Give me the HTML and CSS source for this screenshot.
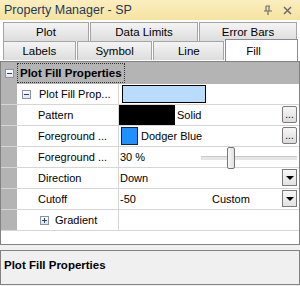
FILE: index.html
```html
<!DOCTYPE html>
<html>
<head>
<meta charset="utf-8">
<title>Property Manager</title>
<link rel="stylesheet" href="styles.css">
</head>
<body>
<div class="window">
	<div class="titlebar">
		<span class="title">Property Manager - SP</span>
		<span class="ctrls">
			<svg width="10" height="11" viewBox="0 0 10 11"><path d="M3 1h4M3 1v5M6 1v5M1 6h8M5 6v4" stroke="#6b6b6b" stroke-width="1.2" fill="none"/></svg>
			<svg width="9" height="9" viewBox="0 0 9 9"><path d="M1 1l7 7M8 1l-7 7" stroke="#6b6b6b" stroke-width="1.5"/></svg>
		</span>
	</div>

	<div class="tabs">
		<div class="tabrow row1">
			<div class="tab">Plot</div>
			<div class="tab">Data Limits</div>
			<div class="tab">Error Bars</div>
		</div>
		<div class="tabrow row2">
			<div class="tab">Labels</div>
			<div class="tab">Symbol</div>
			<div class="tab">Line</div>
			<div class="tab active">Fill</div>
		</div>
	</div>

	<div class="grid">
		<div class="cat">
			<div class="gut"><span class="box minus"></span></div>
			<div class="catname">Plot Fill Properties</div>
		</div>
		<div class="row">
			<div class="gut"></div>
			<div class="name sub"><span class="box minus"></span>Plot Fill Prop...</div>
			<div class="val"><span class="swatch lightblue"></span></div>
		</div>
		<div class="row">
			<div class="gut"></div>
			<div class="name">Pattern</div>
			<div class="val"><span class="pat"></span>Solid<span class="btn">...</span></div>
		</div>
		<div class="row">
			<div class="gut"></div>
			<div class="name">Foreground ...</div>
			<div class="val"><span class="chip"></span>Dodger Blue<span class="btn">...</span></div>
		</div>
		<div class="row">
			<div class="gut"></div>
			<div class="name">Foreground ...</div>
			<div class="val">30 %<span class="slider"><span class="thumb"></span></span></div>
		</div>
		<div class="row">
			<div class="gut"></div>
			<div class="name">Direction</div>
			<div class="val">Down<span class="drop"></span></div>
		</div>
		<div class="row">
			<div class="gut"></div>
			<div class="name">Cutoff</div>
			<div class="val">-50<span class="extra">Custom</span><span class="drop"></span></div>
		</div>
		<div class="row">
			<div class="gut"></div>
			<div class="name sub deep"><span class="box plus"></span>Gradient</div>
			<div class="val"></div>
		</div>
	</div>

	<div class="desc">Plot Fill Properties</div>
</div>
</body>
</html>
```

FILE: styles.css
```css
body {
	margin: 0;
	font-family: "Liberation Sans", Arial, sans-serif;
	font-size: 11px;
	color: #000;
	background: #f0f0f0;
}
.window {
	width: 300px;
	height: 286px;
	display: flex;
	flex-direction: column;
	background: #f0f0f0;
}
.titlebar {
	height: 20px;
	background: linear-gradient(#fbeebf, #f6e39f);
	display: flex;
	align-items: center;
	justify-content: space-between;
	padding: 0 8px 0 4px;
	color: #1e395b;
	font-size: 12.5px;
}
.ctrls {
	display: flex;
	align-items: center;
	gap: 10px;
}
.tabs {
	background: #fff;
	padding: 2px 2px 0 3px;
	height: 41px;
	box-sizing: border-box;
	position: relative;
}
.tabrow {
	display: flex;
	gap: 1px;
	height: 19px;
}
.tab {
	border: 1px solid #a4a4a4;
	border-bottom: none;
	background: linear-gradient(#f4f4f4, #dddddd);
	display: flex;
	align-items: center;
	justify-content: center;
	box-sizing: border-box;
	font-size: 11.5px;
}
.row1 .tab:nth-child(1) { width: 86px; }
.row1 .tab:nth-child(2) { width: 108px; }
.row1 .tab:nth-child(3) { width: 98px; }
.row2 .tab:nth-child(1) { width: 73px; }
.row2 .tab:nth-child(2) { width: 76px; }
.row2 .tab:nth-child(3) { width: 71px; }
.row2 .tab.active {
	width: 73px;
	background: #fff;
	height: 22px;
	margin-top: -2px;
	border-color: #898c95;
	justify-content: flex-start;
	padding-left: 20px;
	position: relative;
	z-index: 1;
}
.grid {
	border: 1px solid #828282;
	background: #fff;
	height: 184px;
	box-sizing: border-box;
	display: flex;
	flex-direction: column;
}
.cat {
	display: flex;
	height: 22px;
	background: #b4b4b4;
}
.gut {
	width: 16px;
	background: #b4b4b4;
	display: flex;
	align-items: center;
	justify-content: center;
	flex: none;
}
.catname {
	font-weight: bold;
	font-size: 11.5px;
	display: flex;
	align-items: center;
	padding: 0 2px;
	border: 1px dotted #333;
	margin: 1px 0;
}
.row {
	display: flex;
	height: 21px;
	border-bottom: 1px solid #d6d6d6;
	box-sizing: border-box;
}
.name {
	width: 102px;
	box-sizing: border-box;
	padding-left: 21px;
	border-right: 1px solid #d6d6d6;
	display: flex;
	align-items: center;
	flex: none;
	white-space: nowrap;
}
.name.sub {
	padding-left: 5px;
}
.name.deep {
	padding-left: 23px;
}
.val {
	flex: 1;
	display: flex;
	align-items: center;
	padding-left: 1px;
	position: relative;
}
.box {
	width: 7px;
	height: 7px;
	border: 1px solid #8a93a8;
	background: linear-gradient(#fff, #dfe4ee);
	position: relative;
	margin-right: 8px;
	flex: none;
}
.deep .box { margin-right: 6px; }
.gut .box { margin: 0; }
.box::before {
	content: "";
	position: absolute;
	left: 1px;
	top: 3px;
	width: 5px;
	height: 1px;
	background: #2b3f7a;
}
.plus::after {
	content: "";
	position: absolute;
	left: 3px;
	top: 1px;
	width: 1px;
	height: 5px;
	background: #2b3f7a;
}
.swatch {
	width: 82px;
	height: 16px;
	border: 1px solid #000;
	margin-left: 2px;
}
.lightblue { background: #b9dbfd; }
.pat {
	width: 56px;
	height: 20px;
	background: #000;
	margin-left: -1px;
	margin-right: 2px;
}
.chip {
	width: 15px;
	height: 16px;
	background: #1e90ff;
	border: 1px solid #222;
	margin-right: 3px;
	margin-left: 1px;
}
.btn {
	position: absolute;
	right: 2px;
	top: 1px;
	width: 15px;
	height: 17px;
	border: 1px solid #7a7a7a;
	border-radius: 2px;
	background: linear-gradient(#f7f7f7, #dcdcdc);
	box-sizing: border-box;
	font-size: 10px;
	line-height: 16px;
	text-align: center;
}
.drop {
	position: absolute;
	right: 2px;
	top: 1px;
	width: 15px;
	height: 17px;
	border: 1px solid #7a7a7a;
	background: linear-gradient(#f7f7f7, #e2e2e2);
	box-sizing: border-box;
}
.drop::after {
	content: "";
	position: absolute;
	left: 3px;
	top: 6px;
	border-left: 4px solid transparent;
	border-right: 4px solid transparent;
	border-top: 4px solid #000;
}
.extra {
	position: absolute;
	left: 93px;
}
.slider {
	position: absolute;
	left: 82px;
	right: 2px;
	top: 9px;
	height: 3px;
	background: #e4e6e4;
	border-top: 1px solid #c8c8c8;
}
.thumb {
	position: absolute;
	left: 26px;
	top: -10px;
	width: 6px;
	height: 20px;
	border: 1px solid #777;
	border-radius: 2px;
	background: linear-gradient(90deg, #f8f8f8, #e0e0e0);
}
.desc {
	margin-top: 5px;
	border: 1px solid #828282;
	flex: 1;
	font-weight: bold;
	font-size: 11.5px;
	padding: 8px 3px;
	background: #f0f0f0;
	margin-bottom: 1px;
}
```
